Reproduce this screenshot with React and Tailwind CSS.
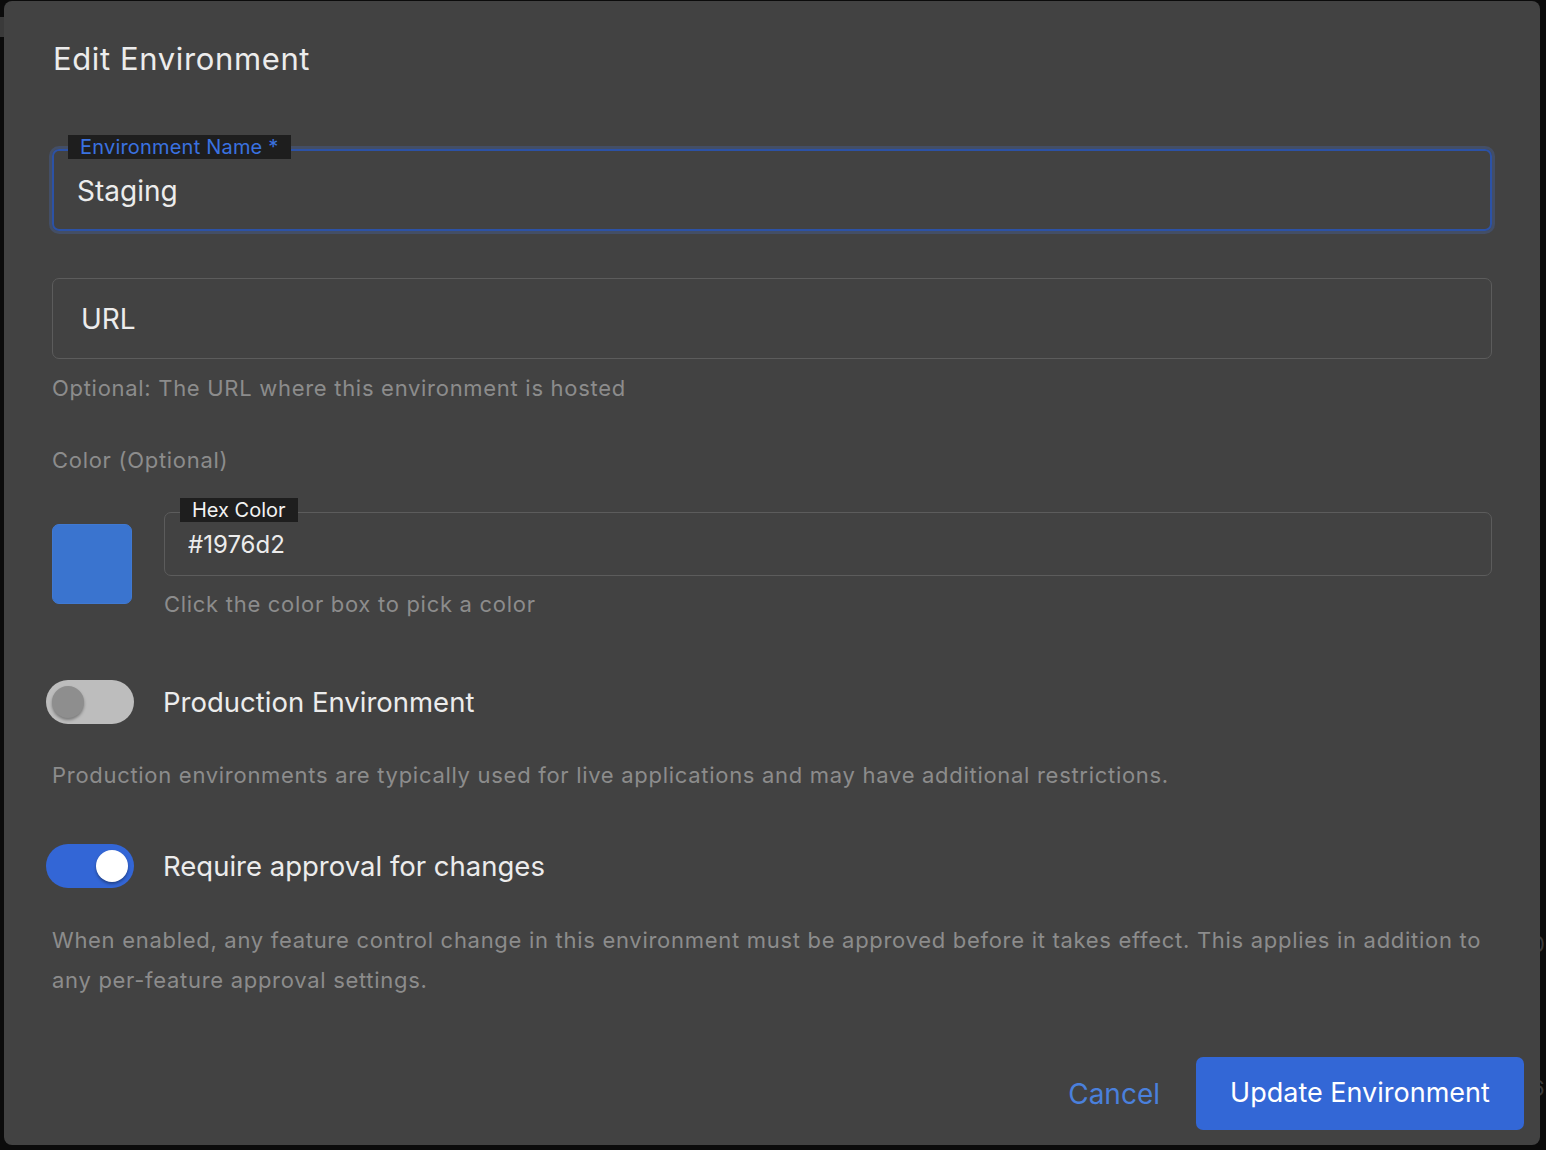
import React, { useState } from "react";

const font = { fontFamily: "Inter, 'Noto Sans', sans-serif" };

const Toggle = ({ on, onClick }) => (
  <button
    type="button"
    onClick={onClick}
    className={`relative w-[88px] h-[44px] rounded-full shrink-0 ${
      on ? "bg-[#3366d6]" : "bg-[#bdbdbd]"
    }`}
  >
    <span
      className={`absolute top-[6px] w-[32px] h-[32px] rounded-full shadow-[0_2px_3px_rgba(0,0,0,0.35)] ${
        on ? "left-[50px] bg-white" : "left-[6px] bg-[#8e8e8e]"
      }`}
    />
  </button>
);

const App = () => {
  const [name, setName] = useState("Staging");
  const [url, setUrl] = useState("");
  const [hex, setHex] = useState("#1976d2");
  const [production, setProduction] = useState(false);
  const [approval, setApproval] = useState(true);

  return (
    <div
      className="relative w-[1546px] h-[1150px] bg-[#0b0b0b] overflow-hidden pt-[1px] pl-[4px]"
      style={font}
    >
      {/* page behind the dialog */}
      <div className="absolute left-0 top-[17px] w-[8px] h-[20px] bg-[#3a3a3a]" />
      <div className="absolute left-[1531px] top-[928px] text-[22px] text-[#3a3a3a]">0</div>
      <div className="absolute left-[1531px] top-[1072px] text-[22px] text-[#3a3a3a]">6</div>

      <div className="relative z-10 w-[1536px] h-[1144px] rounded-lg bg-[#424242] flex flex-col">
        <h2 className="pl-[49px] pt-[38px] text-[31px] leading-[40px] tracking-[0.02em] text-[#ececec] font-normal">
          Edit Environment
        </h2>

        <div className="px-[48px] pt-[70px] flex flex-col">
          {/* Environment name, focused */}
          <div className="relative h-[82px] rounded-[7px] border-2 border-[#2c52a6] shadow-[0_0_0_3px_rgba(70,100,170,0.35)] flex items-center">
            <span className="absolute left-[14px] top-[-16px] bg-[#1e1e1e] px-[12px] h-[24px] flex items-center text-[20px] tracking-[0.01em] text-[#3a72e0]">
              Environment Name *
            </span>
            <input
              value={name}
              onChange={(e) => setName(e.target.value)}
              className="w-full bg-transparent outline-none pl-[23px] pt-[1px] text-[28px] text-[#ececec]"
            />
          </div>

          {/* URL */}
          <div className="mt-[47px] h-[81px] rounded-[7px] border border-[#5c5c5c] flex items-center">
            <input
              value={url}
              onChange={(e) => setUrl(e.target.value)}
              placeholder="URL"
              className="w-full bg-transparent outline-none pl-[28px] text-[28px] text-[#ececec] placeholder:text-[#ececec]"
            />
          </div>
          <p className="mt-[14px] text-[22px] leading-[30px] tracking-[0.032em] text-[#8c8c8c]">
            Optional: The URL where this environment is hosted
          </p>

          <p className="mt-[42px] text-[22px] leading-[30px] tracking-[0.032em] text-[#8c8c8c]">
            Color (Optional)
          </p>

          <div className="mt-[37px] flex gap-[32px]">
            <button
              type="button"
              className="mt-[12px] w-[80px] h-[80px] rounded-[7px] bg-[#3a74cf] border border-[#4079d2] shrink-0"
            />
            <div className="flex-1 flex flex-col">
              <div className="relative h-[64px] rounded-[7px] border border-[#5c5c5c] flex items-center">
                <span className="absolute left-[15px] top-[-15px] bg-[#1e1e1e] px-[12px] h-[24px] flex items-center text-[20px] text-[#f2f2f2]">
                  Hex Color
                </span>
                <input
                  value={hex}
                  onChange={(e) => setHex(e.target.value)}
                  className="w-full bg-transparent outline-none pl-[23px] pt-[2px] text-[24px] text-[#ececec]"
                />
              </div>
              <p className="mt-[13px] text-[22px] leading-[30px] tracking-[0.032em] text-[#8c8c8c]">
                Click the color box to pick a color
              </p>
            </div>
          </div>

          <div className="mt-[61px] -ml-[6px] flex items-center gap-[29px]">
            <Toggle on={production} onClick={() => setProduction(!production)} />
            <span className="pt-[2px] text-[27.5px] text-[#ececec]">Production Environment</span>
          </div>
          <p className="mt-[36px] text-[22px] leading-[30px] tracking-[0.032em] text-[#8c8c8c]">
            Production environments are typically used for live applications and may have additional restrictions.
          </p>

          <div className="mt-[54px] -ml-[6px] flex items-center gap-[29px]">
            <Toggle on={approval} onClick={() => setApproval(!approval)} />
            <span className="pt-[2px] text-[27.5px] text-[#ececec]">Require approval for changes</span>
          </div>
          <p className="mt-[32px] text-[22px] leading-[40px] tracking-[0.032em] text-[#8c8c8c] pr-[10px]">
            When enabled, any feature control change in this environment must be approved before it takes effect. This applies in addition to any per-feature approval settings.
          </p>
        </div>

        <div className="mt-auto mb-[15px] pr-[16px] flex justify-end items-center gap-[16px]">
          <button type="button" className="px-[20px] h-[72px] text-[28px] text-[#4a80dc]">
            Cancel
          </button>
          <button
            type="button"
            className="w-[328px] h-[73px] rounded-[7px] bg-[#3367d6] text-[27px] text-white"
          >
            Update Environment
          </button>
        </div>
      </div>
    </div>
  );
};

export default App;
